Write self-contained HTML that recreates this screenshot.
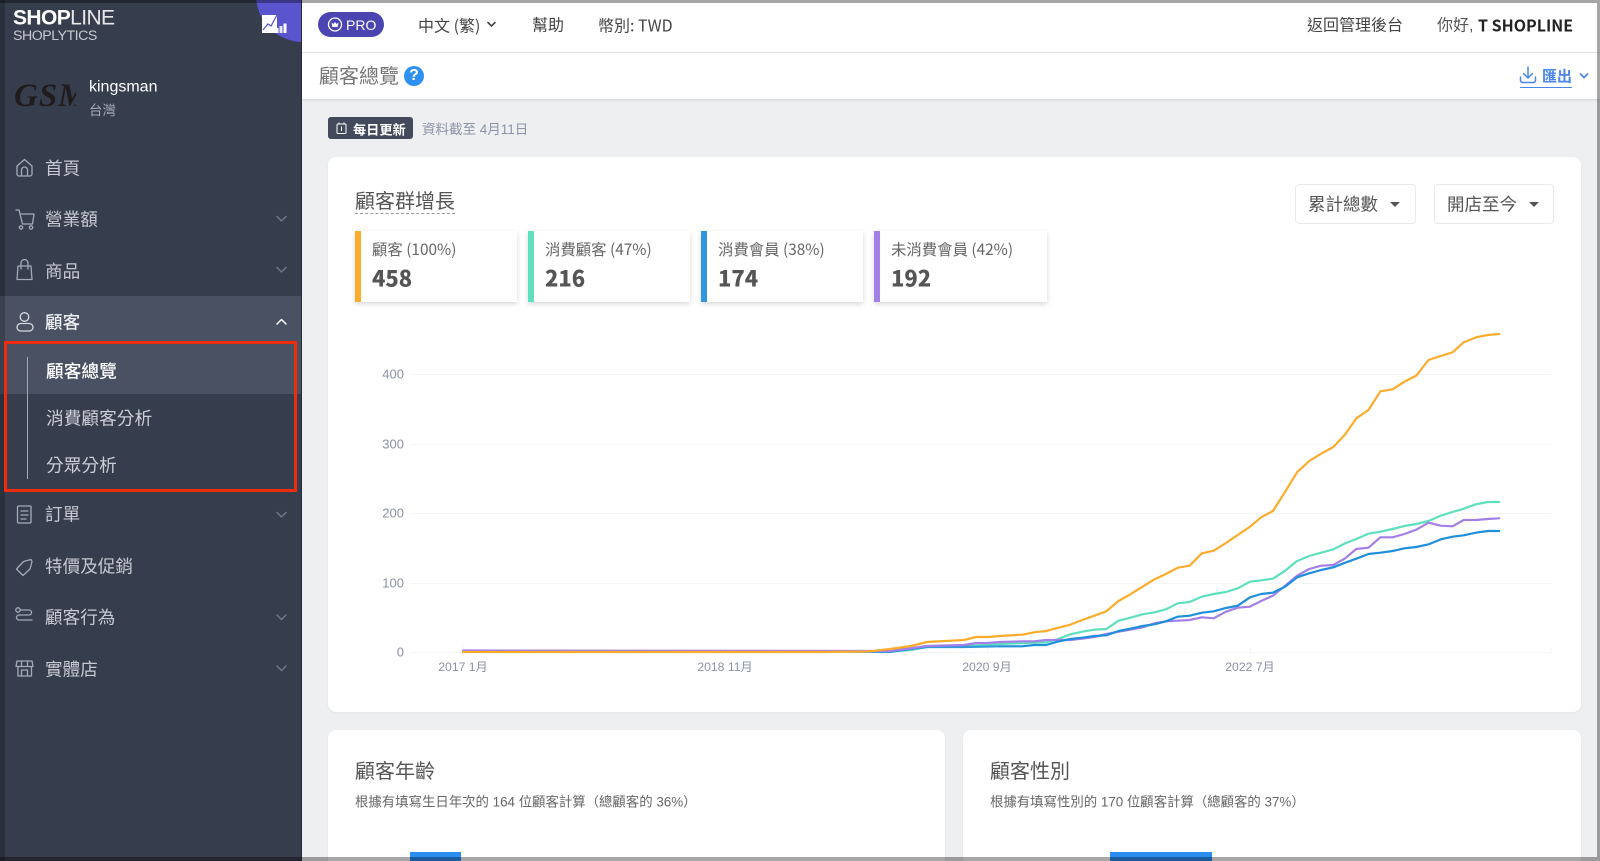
<!DOCTYPE html>
<html lang="zh-Hant"><head><meta charset="utf-8"><title>顧客總覽</title>
<style>
html,body{margin:0;padding:0;width:1600px;height:861px;overflow:hidden;background:#eeeff1}
body{position:relative;font-family:"Liberation Sans","Noto Sans CJK TC",sans-serif;color:#444;filter:blur(.35px)}
div,span.t{box-sizing:border-box}
.a{position:absolute}
.t{position:absolute;transform:translateY(-50%);white-space:nowrap;line-height:1.3}
.n{font-family:"Noto Sans CJK TC","Liberation Sans",sans-serif}
.m{font-size:17.6px;color:#c6c9d1;left:45px}
.s{font-size:17.7px;color:#ccced6;left:46px}
.card{position:absolute;background:#fff;border-radius:8px;box-shadow:0 1px 2px rgba(0,0,0,.05)}
.lg{position:absolute;top:231px;width:162px;height:71px;background:#fff;box-shadow:0 2px 5px rgba(0,0,0,.16)}
.lg i{position:absolute;left:0;top:0;bottom:0;width:6px}
.lb{font-size:15.4px;color:#666;left:372px;top:249px}
.num{font-size:22px;font-weight:900;color:#555;top:278px}
.dd{position:absolute;top:184px;height:40px;border:1px solid #e8e9eb;border-radius:4px;background:#fff}
.ax{font-size:13px;color:#8b91a5}
.xl{font-size:12.2px;color:#8b91a5}
svg{position:absolute;left:0;top:0}
.sub{font-size:13.4px;color:#666;top:802px}
.ti{font-size:20px;color:#555;top:772px}
</style></head><body>

<!-- main surfaces -->
<div class="a" style="left:302px;top:0;width:1298px;height:52px;background:#fff;box-shadow:0 1px 3px rgba(0,0,0,.05)"></div>
<div class="a" style="left:302px;top:53px;width:1298px;height:46px;background:#fff;box-shadow:0 1px 3px rgba(0,0,0,.12)"></div>

<!-- sidebar -->
<div class="a" style="left:0;top:0;width:302px;height:861px;background:#363d4d;overflow:hidden;border-right:1px solid #222c3e">
  <div class="a" style="left:256px;top:-52px;width:94px;height:94px;border-radius:50%;background:#5a55cf"></div>
  <div class="a" style="left:0;top:296px;width:301px;height:98px;background:#495162"></div>
  <div class="a" style="left:0;top:0;width:5px;height:861px;background:rgba(0,0,0,.2)"></div>
</div>
<div class="t" style="left:13px;top:18px;font-size:21px;color:#fff;letter-spacing:-.6px"><b>SHOP</b><span style="font-weight:400;color:#e8e8ea">LINE</span></div>
<div class="t" style="left:13px;top:36px;font-size:14.2px;color:#c8cad0;letter-spacing:-.5px">SHOPLYTICS</div>
<svg width="302" height="50" style="left:0;top:0">
  <path d="M262 33V15h15v18z" fill="#fff"/><path d="M263 30l5-6 3 2 6-11" fill="none" stroke="#5a55cf" stroke-width="1.300"/>
  <rect x="275.500" y="28" width="3" height="5" fill="#fff"/><rect x="279.500" y="26" width="3" height="7" fill="#e8e7f8"/><rect x="283.500" y="23.500" width="3" height="9.500" fill="#fff"/>
  <rect x="277" y="15" width="8" height="8" fill="#5a55cf"/>
</svg>
<div class="a" style="left:14px;top:80px;width:62px;height:32px;overflow:hidden"><span style="font:italic 700 33px/32px 'Liberation Serif',serif;color:#201c1e;letter-spacing:1px;white-space:nowrap">GSM</span></div>
<div class="t" style="left:89px;top:88px;font-size:16px;color:#fff">kingsman</div>
<div class="t" style="left:89px;top:111px;font-size:13.500px;color:#a6abb7">台灣</div>

<div class="t m" style="top:169px">首頁</div>
<div class="t m" style="top:220px">營業額</div>
<div class="t m" style="top:272px">商品</div>
<div class="t m" style="top:323px;color:#eceef1;font-weight:500">顧客</div>
<div class="t s" style="top:372px;color:#fff;font-weight:500">顧客總覽</div>
<div class="t s" style="top:419px">消費顧客分析</div>
<div class="t s" style="top:466px">分眾分析</div>
<div class="t m" style="top:515px">訂單</div>
<div class="t m" style="top:567px">特價及促銷</div>
<div class="t m" style="top:618px">顧客行為</div>
<div class="t m" style="top:670px">實體店</div>
<div class="a" style="left:26.500px;top:357px;width:1.500px;height:122px;background:#a3a8b3"></div>
<div class="a" style="left:4px;top:341px;width:293px;height:151px;border:3px solid #ee2c0c"></div>

<svg width="302" height="700" fill="none" stroke="#a4aab7" stroke-width="1.300" stroke-linecap="round" stroke-linejoin="round" style="left:0;top:0">
  <!-- home -->
  <path d="M17 166l7.500-6.500 7.500 6.500v8a2 2 0 0 1-2 2H19a2 2 0 0 1-2-2z"/><path d="M21.500 176v-6a3 3 0 0 1 6 0v6"/>
  <!-- cart -->
  <path d="M16 210h3l3.500 14h10l1.500-10H20"/><circle cx="21" cy="227.500" r="1.700"/><circle cx="31" cy="227.500" r="1.700"/>
  <!-- bag -->
  <path d="M18 266h13l1 13.500H17z"/><path d="M21 269v-6a3.500 3.500 0 0 1 7 0v6"/>
  <!-- user -->
  <g stroke="#d5d8de"><circle cx="24.500" cy="317" r="4.300"/><rect x="17" y="323.500" width="16" height="7.500" rx="3.750"/></g>
  <!-- order -->
  <rect x="17.500" y="506" width="13.500" height="17" rx="1"/><path d="M21 511h7M21 515h7M21 519h5"/>
  <!-- tag -->
  <path d="M16.500 569l7-7.500 7.500-2 1 2-2 7.500-7 6.500z"/>
  <!-- flow -->
  <path d="M20 610h9a2.500 2.500 0 0 1 0 5H19a2.500 2.500 0 0 0 0 5h13"/><circle cx="18" cy="610" r="2.200"/>
  <!-- store -->
  <path d="M17 661h15l1 5.500H16zM18 667v9h13.500v-9"/><path d="M21.500 661v5.500M27.500 661v5.500M21.500 676v-6h6v6"/>
</svg>
<svg width="302" height="700" fill="none" stroke="#6f7686" stroke-width="1.500" stroke-linecap="round" stroke-linejoin="round" style="left:0;top:0">
  <path d="M277 216.500l4.500 4.500 4.500-4.500M277 267.500l4.500 4.500 4.500-4.500M277 512.500l4.500 4.500 4.500-4.500M277 615l4.500 4.500 4.500-4.500M277 666l4.500 4.500 4.500-4.500"/>
  <path d="M277 324l4.500-4.500 4.500 4.500" stroke="#fff"/>
</svg>

<!-- topbar -->
<div class="a" style="left:318px;top:12px;width:66px;height:25px;border-radius:13px;background:#4a45b0"></div>
<svg width="400" height="50" style="left:300px;top:0"><circle cx="35" cy="24.500" r="6.500" fill="none" stroke="#fff" stroke-width="1.300"/><path d="M31.500 22.500l2 1.500 1.500-2 1.500 2 2-1.500-.8 4.500h-5.400z" fill="#fff"/>
<path d="M188 22.500l3.500 3.500 3.500-3.500" fill="none" stroke="#444" stroke-width="1.600" stroke-linecap="round"/></svg>
<div class="t" style="left:346px;top:25px;font-size:14px;color:#fff">PRO</div>
<div class="t n" style="left:418px;top:25px;font-size:16px;color:#444">中文 (繁)</div>
<div class="t" style="left:532px;top:27px;font-size:16px;color:#444">幫助</div>
<div class="t n" style="left:598px;top:25px;font-size:16px;color:#444">幣別: TWD</div>
<div class="t" style="left:1307px;top:27px;font-size:16px;color:#444">返回管理後台</div>
<div class="t" style="left:1437px;top:27px;font-size:16px;color:#555">你好,</div>
<div class="t n" style="left:1478px;top:25px;font-size:16px;font-weight:700;color:#222">T SHOPLINE</div>

<!-- page header -->
<div class="t" style="left:319px;top:77px;font-size:20px;color:#777">顧客總覽</div>
<div class="a" style="left:404px;top:66px;width:20px;height:20px;border-radius:50%;background:#2e90f0;color:#fff;font:700 16px/20px 'Liberation Sans',sans-serif;text-align:center">?</div>
<svg width="120" height="100" fill="none" stroke-linecap="round" stroke-linejoin="round" style="left:1500px;top:0">
  <g stroke="#4a86e8" stroke-width="1.500"><path d="M28 67v11M23.500 73.500l4.500 4.500 4.500-4.500M20.500 77v3.500a2 2 0 0 0 2 2h11a2 2 0 0 0 2-2V77"/><path d="M80.500 74l3.500 3.500 3.500-3.500" stroke-width="1.700"/></g>
</svg>
<div class="t" style="left:1542px;top:77px;font-size:15px;font-weight:700;color:#4a86e8">匯出</div>
<div class="a" style="left:1520px;top:87px;width:52px;height:1px;background:#4a86e8"></div>

<!-- badge -->
<div class="a" style="left:328px;top:117px;width:85px;height:22px;border-radius:3px;background:#424a5b"></div>
<svg width="30" height="30" style="left:330px;top:115px" fill="none" stroke="#fff" stroke-width="1"><rect x="7" y="9" width="9" height="9.500" rx="1"/><path d="M9 7.500v2M14 7.500v2M11.500 11.500v4.500"/></svg>
<div class="t" style="left:353px;top:129.500px;font-size:13.200px;font-weight:700;color:#fff">每日更新</div>
<div class="t" style="left:422px;top:130px;font-size:13.500px;color:#8b93a7">資料截至 4月11日</div>

<!-- main card -->
<div class="card" style="left:328px;top:157px;width:1253px;height:555px"></div>
<div class="t" style="left:355px;top:201.500px;font-size:20px;color:#555">顧客群增長</div>
<div class="a" style="left:355px;top:213px;width:100px;border-top:1px dashed #999"></div>

<div class="dd" style="left:1295px;width:121px"></div>
<div class="t" style="left:1308px;top:205px;font-size:17.500px;color:#555">累計總數</div>
<div class="a" style="left:1390px;top:202px;border:5.500px solid transparent;border-top:5.500px solid #555;border-bottom:0"></div>
<div class="dd" style="left:1434px;width:120px"></div>
<div class="t" style="left:1447px;top:205px;font-size:17.500px;color:#555">開店至今</div>
<div class="a" style="left:1529px;top:202px;border:5.500px solid transparent;border-top:5.500px solid #555;border-bottom:0"></div>

<div class="lg" style="left:355px"><i style="background:#fcac2b"></i></div>
<div class="lg" style="left:528px"><i style="background:#5edfbd"></i></div>
<div class="lg" style="left:701px"><i style="background:#2f98dd"></i></div>
<div class="lg" style="left:874px;width:173px"><i style="background:#a37fe7"></i></div>
<div class="t lb n" style="left:372px">顧客 (100%)</div>
<div class="t lb n" style="left:545px">消費顧客 (47%)</div>
<div class="t lb n" style="left:718px">消費會員 (38%)</div>
<div class="t lb n" style="left:891px">未消費會員 (42%)</div>
<div class="t num n" style="left:372px">458</div>
<div class="t num n" style="left:545px">216</div>
<div class="t num n" style="left:718px">174</div>
<div class="t num n" style="left:891px">192</div>

<!-- chart -->
<svg width="1600" height="861" fill="none" stroke-linejoin="round" stroke-linecap="round">
  <g stroke="#f3f4f5" stroke-width="1">
    <path d="M411 374.500H1551M411 444.500H1551M411 513.500H1551M411 583.500H1551M411 652.500H1551"/>
    <path d="M463.500 647V652M725.500 647V652M987.500 647V652M1250.500 647V652M1551 647V652"/>
  </g>
  <g stroke-width="2.200">
    <polyline stroke="#5edfbd" points="825,651.500 890,651.500 911,650 927,647 964,646 988,645 1000,644"/>
    <polyline stroke="#2f98dd" points="825,651.500 890,652 911,649 927,647 964,647 1000,646.300"/>
    <polyline stroke="#a37fe7" points="463,650.500 890,651 927,646 964,645 976,643 988,643 1000,642"/>
    <polyline stroke="#fcac2b" points="463,652 825,652 868,651.500 890,649 911,646 927,642 964,640 976,637 988,637 1000,636"/>
  </g>
  <g transform="translate(1000,320) scale(.37037,.33333)" stroke-width="2.200">
    <polyline vector-effect="non-scaling-stroke" stroke="#5edfbd" points="0,972 125,967 155,958 190,943 222,935 255,929 287,927 320,902 352,893 385,883 417,877 448,868 480,850 512,846 545,830 577,822 610,816 642,805 675,785 705,781 737,776 770,752 802,723 835,708 867,698 900,688 932,670 962,657 995,641 1027,635 1060,627 1092,618 1124,612 1157,603 1190,587 1222,576 1252,566 1285,553 1317,546 1348,546"/>
    <polyline vector-effect="non-scaling-stroke" stroke="#a37fe7" points="0,966 60,964 92,964 125,960 155,960 190,960 222,956 255,951 287,942 320,935 352,929 385,922 417,910 448,904 480,902 512,900 545,892 577,895 610,875 642,863 675,860 705,843 737,827 770,797 802,767 835,747 867,737 900,735 932,715 962,687 995,683 1027,652 1060,652 1092,642 1124,629 1157,608 1190,617 1222,619 1252,600 1285,600 1317,597 1348,595"/>
    <polyline vector-effect="non-scaling-stroke" stroke="#1f8fdc" points="0,979 60,979 92,975 125,975 155,965 190,957 222,953 255,948 287,946 320,933 352,926 385,918 417,913 448,904 480,890 512,887 545,878 577,874 610,864 642,857 675,832 705,822 737,818 770,800 802,772 835,760 867,750 900,742 932,728 962,716 995,702 1027,698 1060,693 1092,685 1124,681 1157,673 1190,658 1222,650 1252,646 1285,638 1317,633 1348,633"/>
    <polyline vector-effect="non-scaling-stroke" stroke="#fcac2b" points="0,948 60,944 92,937 125,933 155,924 190,914 222,900 255,887 287,874 320,843 352,823 385,800 417,778 448,762 480,743 512,737 545,700 577,692 610,669 642,645 675,620 705,592 737,573 770,515 802,457 835,423 867,401 900,381 932,343 962,295 995,270 1027,214 1060,208 1092,185 1124,167 1157,120 1190,108 1222,97 1252,67 1285,52 1317,45 1348,42"/>
  </g>
</svg>
<div class="t ax" style="left:380px;width:24px;text-align:right;top:375px">400</div>
<div class="t ax" style="left:380px;width:24px;text-align:right;top:445px">300</div>
<div class="t ax" style="left:380px;width:24px;text-align:right;top:514px">200</div>
<div class="t ax" style="left:380px;width:24px;text-align:right;top:584px">100</div>
<div class="t ax" style="left:380px;width:24px;text-align:right;top:653px">0</div>
<div class="t xl" style="left:413px;width:100px;text-align:center;top:668px">2017 1月</div>
<div class="t xl" style="left:675px;width:100px;text-align:center;top:668px">2018 11月</div>
<div class="t xl" style="left:937px;width:100px;text-align:center;top:668px">2020 9月</div>
<div class="t xl" style="left:1200px;width:100px;text-align:center;top:668px">2022 7月</div>

<!-- bottom cards -->
<div class="card" style="left:328px;top:730px;width:617px;height:150px"></div>
<div class="card" style="left:963px;top:730px;width:618px;height:150px"></div>
<div class="t ti" style="left:355px">顧客年齡</div>
<div class="t sub" style="left:355px">根據有填寫生日年次的 164 位顧客計算（總顧客的 36%）</div>
<div class="t ti" style="left:990px">顧客性別</div>
<div class="t sub" style="left:990px">根據有填寫性別的 170 位顧客計算（總顧客的 37%）</div>
<div class="a" style="left:410px;top:852px;width:51px;height:9px;background:#2b8df0"></div>
<div class="a" style="left:1110px;top:852px;width:102px;height:9px;background:#2b8df0"></div>

<!-- window frame overlays -->
<div class="a" style="left:0;top:0;width:1600px;height:3px;background:rgba(0,0,0,.35)"></div>
<div class="a" style="left:0;top:857px;width:1600px;height:4px;background:rgba(0,0,0,.35)"></div>
<div class="a" style="left:1597px;top:3px;width:3px;height:854px;background:rgba(0,0,0,.35)"></div>
</body></html>
